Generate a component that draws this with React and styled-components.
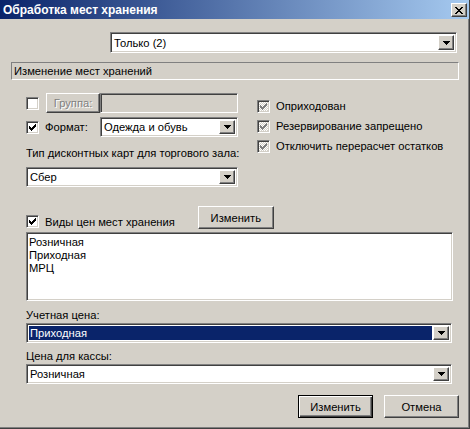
import styled, { createGlobalStyle, css } from "styled-components";

const face = "#d4d0c8";
const shadow = "#808080";
const dark = "#404040";

const GlobalStyle = createGlobalStyle`
  html, body {
    margin: 0;
    padding: 0;
    background: ${face};
  }
  body {
    font-family: "Liberation Sans", Arial, sans-serif;
    font-size: 11.2px;
    color: #000;
  }
`;

const sunken = css`
  border: 1px solid;
  border-color: ${shadow} #fff #fff ${shadow};
  box-shadow: inset 1px 1px ${dark}, inset -1px -1px ${face};
`;

const raised = css`
  border: 1px solid;
  border-color: #fff ${dark} ${dark} #fff;
  box-shadow: inset -1px -1px ${shadow}, inset 1px 1px ${face};
`;

const Window = styled.div`
  box-sizing: border-box;
  width: 470px;
  height: 429px;
  background: ${face};
  border-right: 1px solid ${dark};
  border-bottom: 1px solid ${dark};
  box-shadow: inset -1px -1px ${shadow};
  display: flex;
  flex-direction: column;
`;

const TitleBar = styled.div`
  height: 19px;
  display: flex;
  align-items: center;
  justify-content: space-between;
  padding: 0 2px 0 3px;
  background: linear-gradient(to right, #0a246a, #a6caf0);
`;

const Title = styled.span`
  color: #fff;
  font-family: "Liberation Sans", Arial, sans-serif;
  font-weight: bold;
  font-size: 12px;
`;

const CloseButton = styled.div`
  box-sizing: border-box;
  width: 16px;
  height: 14px;
  background: ${face};
  ${raised};
  display: flex;
  align-items: center;
  justify-content: center;
  margin-top: 1px;
`;

const Content = styled.div`
  padding: 0 10px 0 11px;
  display: flex;
  flex-direction: column;
`;

const ComboShell = styled.div`
  box-sizing: border-box;
  width: ${(p) => p.$width}px;
  height: ${(p) => p.$height || 20}px;
  margin-left: ${(p) => p.$offset || 0}px;
  background: #fff;
  ${sunken};
  display: flex;
  padding: 2px;
`;

const ComboField = styled.div`
  flex: 1;
  display: flex;
  align-items: center;
  padding-left: 1px;
  margin-right: 1px;
  white-space: nowrap;
  overflow: hidden;
  ${(p) =>
    p.$selected &&
    css`
      background: #0a246a;
      color: #fff;
    `}
`;

const DropButton = styled.div`
  box-sizing: border-box;
  width: 16px;
  background: ${face};
  ${raised};
  display: flex;
  align-items: center;
  justify-content: center;
`;

const StatusPanel = styled.div`
  box-sizing: border-box;
  height: 18px;
  margin-top: 9px;
  padding-left: 2px;
  display: flex;
  align-items: center;
  border: 1px solid;
  border-color: ${shadow} #fff #fff ${shadow};
`;

const Section = styled.div`
  padding-left: 15px;
  display: flex;
  flex-direction: column;
`;

const Columns = styled.div`
  display: flex;
  margin-top: 13px;
`;

const LeftColumn = styled.div`
  width: 212px;
  display: flex;
  flex-direction: column;
`;

const RightColumn = styled.div`
  margin-left: 19px;
  padding-top: 3px;
  display: flex;
  flex-direction: column;
`;

const Row = styled.div`
  display: flex;
  align-items: ${(p) => p.$align || "center"};
  height: ${(p) => p.$height || 20}px;
  margin-top: ${(p) => p.$gap || 0}px;
`;

const Box = styled.div`
  box-sizing: border-box;
  flex: none;
  width: 13px;
  height: 13px;
  ${sunken};
  background: ${(p) =>
    p.$disabled
      ? `repeating-conic-gradient(#fff 0 25%, ${face} 0 50%) 0 0 / 2px 2px`
      : "#fff"};
  display: flex;
  align-items: center;
  justify-content: center;
  margin-bottom: ${(p) => p.$lift || 0}px;
`;

const CheckText = styled.span`
  margin-left: ${(p) => p.$gap || 6}px;
  white-space: nowrap;
`;

const Button = styled.div`
  box-sizing: border-box;
  flex: none;
  width: ${(p) => p.$width}px;
  height: ${(p) => p.$height || 23}px;
  background: ${face};
  display: flex;
  align-items: center;
  justify-content: center;
  ${(p) =>
    p.$default
      ? css`
          border: 1px solid #000;
          box-shadow: inset 1px 1px #fff, inset -1px -1px ${dark},
            inset -2px -2px ${shadow};
        `
      : raised};
  ${(p) =>
    p.$disabled &&
    css`
      color: ${shadow};
      text-shadow: 1px 1px #fff;
    `}
`;

const TextInput = styled.div`
  box-sizing: border-box;
  flex: 1;
  height: 20px;
  background: ${face};
  ${sunken};
`;

const Caption = styled.div`
  line-height: 13px;
  margin-top: ${(p) => p.$gap || 0}px;
  white-space: nowrap;
`;

const ListBox = styled.div`
  box-sizing: border-box;
  width: 427px;
  height: 69px;
  margin-top: 3px;
  padding: 3px 2px;
  background: #fff;
  ${sunken};
`;

const ListItem = styled.div`
  line-height: 13px;
`;

const Footer = styled.div`
  display: flex;
  justify-content: flex-end;
  gap: 11px;
  margin-top: 11px;
`;

const pixelProps = { fill: "currentColor", shapeRendering: "crispEdges" };

const Check = ({ color = "#000" }) => (
  <svg width="7" height="7" viewBox="0 0 7 7" style={{ color }}>
    <path
      {...pixelProps}
      d="M6 0h1v1h-1z M5 1h2v1h-2z M0 2h1v1h-1z M4 2h3v1h-3z M0 3h2v1h-2z M3 3h3v1h-3z M0 4h5v1h-5z M1 5h3v1h-3z M2 6h1v1h-1z"
    />
  </svg>
);

const Arrow = () => (
  <svg width="7" height="4" viewBox="0 0 7 4">
    <path {...pixelProps} d="M0 0h7v1h-7z M1 1h5v1h-5z M2 2h3v1h-3z M3 3h1v1h-1z" />
  </svg>
);

const CloseGlyph = () => (
  <svg width="8" height="7" viewBox="0 0 8 7">
    <path
      {...pixelProps}
      d="M0 0h2v1h-2z M6 0h2v1h-2z M1 1h2v1h-2z M5 1h2v1h-2z M2 2h4v1h-4z M3 3h2v1h-2z M2 4h4v1h-4z M1 5h2v1h-2z M5 5h2v1h-2z M0 6h2v1h-2z M6 6h2v1h-2z"
    />
  </svg>
);

const ComboBox = ({ value, width, offset, height, selected }) => (
  <ComboShell $width={width} $offset={offset} $height={height}>
    <ComboField $selected={selected}>{value}</ComboField>
    <DropButton>
      <Arrow />
    </DropButton>
  </ComboShell>
);

const CheckBox = ({ checked, disabled, lift }) => (
  <Box $disabled={disabled} $lift={lift}>
    {checked && <Check color={disabled ? shadow : "#000"} />}
  </Box>
);

const flags = [
  "Оприходован",
  "Резервирование запрещено",
  "Отключить перерасчет остатков",
];

const priceKinds = ["Розничная", "Приходная", "МРЦ"];

export default function App() {
  return (
    <>
      <GlobalStyle />
      <Window>
        <TitleBar>
          <Title>Обработка мест хранения</Title>
          <CloseButton>
            <CloseGlyph />
          </CloseButton>
        </TitleBar>
        <Content>
          <div style={{ marginTop: 13 }}>
            <ComboBox value="Только (2)" width={347} offset={99} height={21} />
          </div>
          <StatusPanel>Изменение мест хранений</StatusPanel>
          <Section>
            <Columns>
              <LeftColumn>
                <Row>
                  <CheckBox />
                  <div style={{ width: 7 }} />
                  <Button $width={54} $height={20} $disabled>
                    Группа:
                  </Button>
                  <TextInput />
                </Row>
                <Row $gap={4}>
                  <CheckBox checked />
                  <CheckText>Формат:</CheckText>
                  <div style={{ flex: 1 }} />
                  <ComboBox value="Одежда и обувь" width={138} />
                </Row>
                <Caption $gap={10}>Тип дисконтных карт для торгового зала:</Caption>
                <div style={{ marginTop: 7 }}>
                  <ComboBox value="Сбер" width={212} />
                </div>
              </LeftColumn>
              <RightColumn>
                {flags.map((f) => (
                  <Row key={f}>
                    <CheckBox checked disabled />
                    <CheckText>{f}</CheckText>
                  </Row>
                ))}
              </RightColumn>
            </Columns>
            <Row $gap={19} $height={23} $align="flex-end">
              <CheckBox checked lift={1} />
              <CheckText style={{ marginBottom: 1 }}>Виды цен мест хранения</CheckText>
              <div style={{ flex: 1, maxWidth: 23 }} />
              <Button $width={76}>Изменить</Button>
            </Row>
            <ListBox>
              {priceKinds.map((k) => (
                <ListItem key={k}>{k}</ListItem>
              ))}
            </ListBox>
            <Caption $gap={8}>Учетная цена:</Caption>
            <div style={{ marginTop: 1 }}>
              <ComboBox value="Приходная" width={426} selected />
            </div>
            <Caption $gap={7}>Цена для кассы:</Caption>
            <div style={{ marginTop: 1 }}>
              <ComboBox value="Розничная" width={426} />
            </div>
          </Section>
          <Footer>
            <Button $width={75} $default>
              Изменить
            </Button>
            <Button $width={75}>Отмена</Button>
          </Footer>
        </Content>
      </Window>
    </>
  );
}
